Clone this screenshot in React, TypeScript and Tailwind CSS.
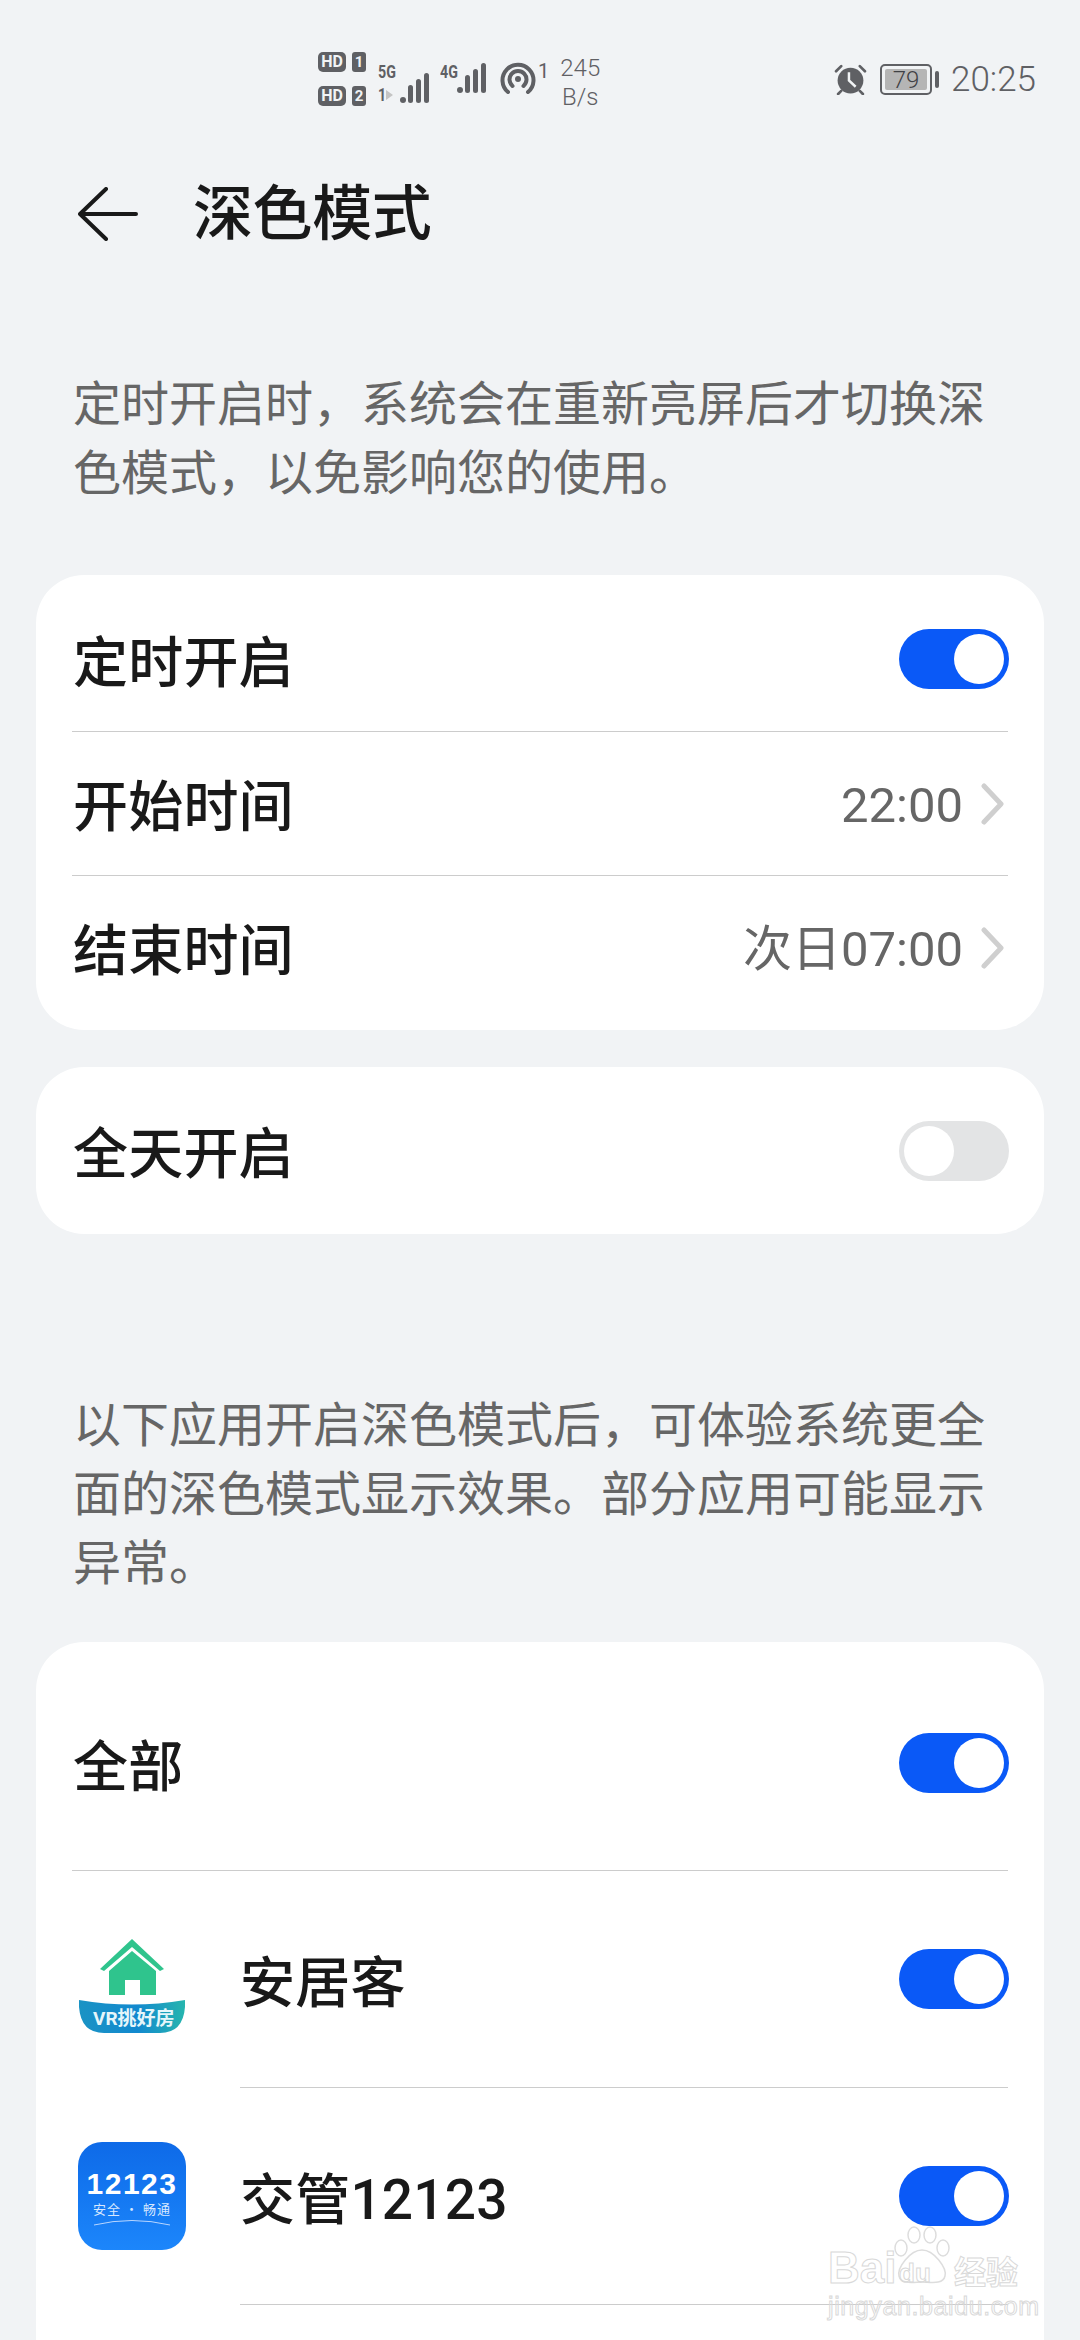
import React from 'react';

const Toggle = ({ on = true }: { on?: boolean }) => (
  <div className={`flex h-[60px] w-[110px] items-center rounded-full px-[5px] ${on ? 'justify-end bg-[#0a59f7]' : 'justify-start bg-[#e3e4e5]'}`}>
    <div className="h-[50px] w-[50px] rounded-full bg-white" />
  </div>
);

const Chevron = () => (
  <svg width="24" height="42" viewBox="0 0 24 42" className="ml-[18px] mr-[9px]" fill="none">
    <path d="M3 3 L20 21 L3 39" stroke="#cfcfcf" strokeWidth="5" strokeLinecap="round" strokeLinejoin="round" />
  </svg>
);

const Divider = ({ className = 'ml-[36px]' }: { className?: string }) => (
  <div className={`mr-[36px] h-px bg-[#cccccc] ${className}`} />
);

const Label = ({ text, className = '' }: { text: string; className?: string }) => (
  <span className={`pt-[8px] text-[55px] font-medium leading-none tracking-[0.2px] text-[#191919] ${className}`}>{text}</span>
);

const ValueRow = ({ label, value }: { label: string; value: string }) => (
  <div className="flex h-[143px] items-center justify-between pl-[37px] pr-[30px]">
    <Label text={label} />
    <div className="flex items-center">
      <span className="pt-[4px] text-[49px] leading-none text-[#666666]">{value}</span>
      <Chevron />
    </div>
  </div>
);

const SignalBars = ({ step }: { step: number }) => (
  <svg width={step * 3 + 9} height="32" viewBox={`0 0 ${step * 3 + 9} 32`} fill="#5f6064">
    <circle cx="3" cy="28" r="3" />
    <rect x={step} y="13" width="5" height="18" rx="2.5" />
    <rect x={step * 2} y="7" width="5" height="24" rx="2.5" />
    <rect x={step * 3} y="1" width="5" height="30" rx="2.5" />
  </svg>
);

const HdBadge = ({ n }: { n: string }) => (
  <div className="flex h-[20px] items-center gap-[6px]">
    <div className="flex h-[20px] w-[28px] items-center justify-center rounded-[5px] bg-[#5f6064] text-[16px] font-bold leading-none text-[#f1f3f5]">HD</div>
    <div className="flex h-[20px] w-[14px] items-center justify-center rounded-[3px] bg-[#5f6064] text-[15px] font-bold leading-none text-[#f1f3f5]">{n}</div>
  </div>
);

const StatusBar = () => (
  <div className="flex h-[135px] items-start justify-between pl-[318px] pr-[44px] pt-[52px] text-[#5f6064]">
    <div className="flex items-start">
      <div className="flex flex-col gap-[14px]">
        <HdBadge n="1" />
        <HdBadge n="2" />
      </div>
      <div className="ml-[12px] mt-[10px] flex items-end">
        <div className="flex w-[22px] flex-col gap-[4px] text-[19px] font-bold leading-none">
          <span className="origin-left scale-x-75">5G</span>
          <div className="flex items-center">
            <span className="w-[8px] origin-left scale-x-75">1</span>
            <div className="h-0 w-0 border-y-[5px] border-l-[7px] border-y-transparent border-l-[#c4c4c4]" />
          </div>
        </div>
        <SignalBars step={8} />
      </div>
      <div className="ml-[7px] mt-[10px] flex items-end">
        <div className="flex h-[32px] w-[17px] flex-col text-[19px] font-bold leading-none">
          <span className="origin-left scale-x-75">4G</span>
        </div>
        <SignalBars step={8} />
      </div>
      <svg width="36" height="32" viewBox="0 0 36 32" fill="none" stroke="#5f6064" strokeWidth="4" strokeLinecap="round" className="ml-[10px] mt-[10px]">
        <path d="M8 30 A15.5 15.5 0 1 1 28 30" />
        <path d="M12.5 24 A8.5 8.5 0 1 1 23.5 24" />
        <circle cx="18" cy="17" r="3" fill="#5f6064" stroke="none" />
      </svg>
      <span className="ml-[2px] mt-[9px] text-[20px] leading-none">1</span>
      <div className="ml-[11px] mt-[2px] flex w-[40px] flex-col items-center text-[24px] font-light leading-[29px]">
        <span>245</span>
        <span>B/s</span>
      </div>
    </div>
    <div className="mt-[10px] flex items-center">
      <svg width="33" height="31" viewBox="0 0 32 30" fill="#5f6064">
        <circle cx="16" cy="16" r="12.5" />
        <path d="M2 7 L7 2 M30 7 L25 2 M7 26 L4 29 M25 26 L28 29" stroke="#5f6064" strokeWidth="2.6" strokeLinecap="round" />
        <path d="M14.5 8 V16 L21 22" stroke="#f1f3f5" strokeWidth="2.4" fill="none" />
      </svg>
      <div className="ml-[13px] flex items-center">
        <div className="flex h-[31px] w-[52px] items-center rounded-[5px] border-2 border-[#5f6064] p-[3px]">
          <div className="flex h-full w-[43px] items-center justify-center rounded-[2px] bg-[#b5b5b5] text-[24px] font-light leading-none text-[#3f4044]">79</div>
        </div>
        <div className="ml-[3px] h-[17px] w-[4px] rounded-[2px] bg-[#5f6064]" />
      </div>
      <span className="ml-[12px] text-[35px] font-light leading-none">20:25</span>
    </div>
  </div>
);

const AnjukeIcon = () => (
  <div className="relative h-[108px] w-[108px]">
    <svg width="108" height="96" viewBox="0 0 108 96" className="absolute left-0 top-[14px]">
      <defs>
        <linearGradient id="band" x1="0" y1="0" x2="1" y2="0">
          <stop offset="0" stopColor="#1a93c4" />
          <stop offset="0.55" stopColor="#1289cf" />
          <stop offset="1" stopColor="#26b5ae" />
        </linearGradient>
      </defs>
      <path d="M22 30 L54 0 L86 30 L82 32 L54 8 L26 32 Z" fill="#2fc48d" />
      <path d="M31 32 L54 12 L78 32 V56 H62 V41 H47 V56 H31 Z" fill="#2fc48d" />
      <path d="M1 61 Q54 70 107 61 V68 Q105 94 82 94 H26 Q3 94 1 68 Z" fill="url(#band)" />
    </svg>
    <span className="absolute left-[15px] top-[84px] whitespace-nowrap text-[19px] font-bold leading-none text-[#e6f6fa]">VR挑好房</span>
  </div>
);

const TrafficIcon = () => (
  <div className="relative flex h-[108px] w-[108px] flex-col items-center rounded-[24px] bg-gradient-to-b from-[#0e6ae8] to-[#1c86fb]">
    <span className="mt-[30px] text-[30px] font-bold leading-[24px] tracking-[1.5px] text-white [font-family:'Liberation_Sans',sans-serif]">12123</span>
    <span className="mt-[6px] whitespace-nowrap text-[13px] leading-none tracking-[1px] text-[#d7e8ff] [font-family:'Noto_Sans_CJK_SC',serif]">安全 · 畅通</span>
    <svg width="78" height="8" viewBox="0 0 78 8" className="mt-[3px]" fill="none">
      <path d="M1 7 Q39 -2 77 7" stroke="#b8d6ff" strokeWidth="1" />
    </svg>
  </div>
);

const AppRow = ({ name, icon }: { name: string; icon: React.ReactNode }) => (
  <>
    <div className="flex h-[216px] items-center pl-[42px] pr-[35px]">
      {icon}
      <Label text={name} className="ml-[54px] flex-1" />
      <Toggle />
    </div>
    <Divider className="ml-[204px]" />
  </>
);

// watermark sits on top of the last row
const Watermark = () => {
  const stroke = 'text-transparent [-webkit-text-stroke:1px_#d9d9d9]';
  return (
    <div className="absolute left-[828px] top-[2226px] h-[96px] w-[196px] [font-family:'Liberation_Sans',sans-serif]">
      <span className={`absolute left-0 top-[20px] text-[44px] font-bold leading-none ${stroke}`}>Bai</span>
      <svg width="60" height="60" viewBox="0 0 60 60" className="absolute left-[64px] top-0" fill="#ffffff" stroke="#dddddd" strokeWidth="1.5">
        <ellipse cx="9" cy="22" rx="6" ry="8" />
        <ellipse cx="22" cy="9" rx="6" ry="8" />
        <ellipse cx="38" cy="9" rx="6" ry="8" />
        <ellipse cx="51" cy="22" rx="6" ry="8" />
        <path d="M30 24 C18 24 5 42 7 50 C9 59 22 56 30 56 C38 56 51 59 53 50 C55 42 42 24 30 24 Z" />
      </svg>
      <span className={`absolute left-[71px] top-[34px] text-[26px] font-bold leading-none ${stroke}`}>du</span>
      <span className={`absolute left-[126px] top-[28px] whitespace-nowrap text-[32px] font-bold leading-none [font-family:'Noto_Sans_CJK_SC',sans-serif] ${stroke}`}>经验</span>
      <span className={`absolute left-0 top-[68px] whitespace-nowrap text-[25px] leading-none tracking-[0.6px] ${stroke}`}>jingyan.baidu.com</span>
    </div>
  );
};

export default function App() {
  return (
    <div className="relative h-[2340px] w-[1080px] overflow-hidden bg-[#f1f3f5] [font-family:Roboto,'Noto_Sans_CJK_SC',sans-serif]">
      <StatusBar />

      <div className="flex h-[235px] items-start pl-[78px] pt-[50px]">
        <svg width="60" height="54" viewBox="0 0 60 54" fill="none" stroke="#191919" strokeWidth="4" strokeLinecap="round" strokeLinejoin="round" className="mt-[2px]">
          <path d="M28 2 L2 27 L28 52 M2 27 H58" />
        </svg>
        <span className="ml-[55px] text-[60px] font-medium leading-[60px] tracking-[-0.4px] text-[#191919]">深色模式</span>
      </div>

      <p className="mx-[73px] text-[48px] leading-[69px] text-[#666666]">定时开启时，系统会在重新亮屏后才切换深色模式，以免影响您的使用。</p>

      <div className="mx-[36px] mt-[67px] rounded-[48px] bg-white">
        <div className="flex h-[156px] items-center justify-between pl-[37px] pr-[35px] pt-[12px]">
          <Label text="定时开启" />
          <Toggle />
        </div>
        <Divider />
        <ValueRow label="开始时间" value="22:00" />
        <Divider />
        <div className="pb-[11px]">
          <ValueRow label="结束时间" value="次日07:00" />
        </div>
      </div>

      <div className="mx-[36px] mt-[37px] flex h-[167px] items-center justify-between rounded-[48px] bg-white pl-[37px] pr-[35px]">
        <Label text="全天开启" />
        <Toggle on={false} />
      </div>

      <p className="mx-[73px] mt-[157px] text-[48px] leading-[69px] text-[#666666]">以下应用开启深色模式后，可体验系统更全面的深色模式显示效果。部分应用可能显示异常。</p>

      <div className="mx-[36px] mt-[44px] rounded-t-[48px] bg-white pb-[100px]">
        <div className="flex h-[228px] items-center justify-between pl-[37px] pr-[35px] pt-[14px]">
          <Label text="全部" />
          <Toggle />
        </div>
        <Divider />
        <AppRow name="安居客" icon={<AnjukeIcon />} />
        <AppRow name="交管12123" icon={<TrafficIcon />} />
      </div>

      <Watermark />
    </div>
  );
}
